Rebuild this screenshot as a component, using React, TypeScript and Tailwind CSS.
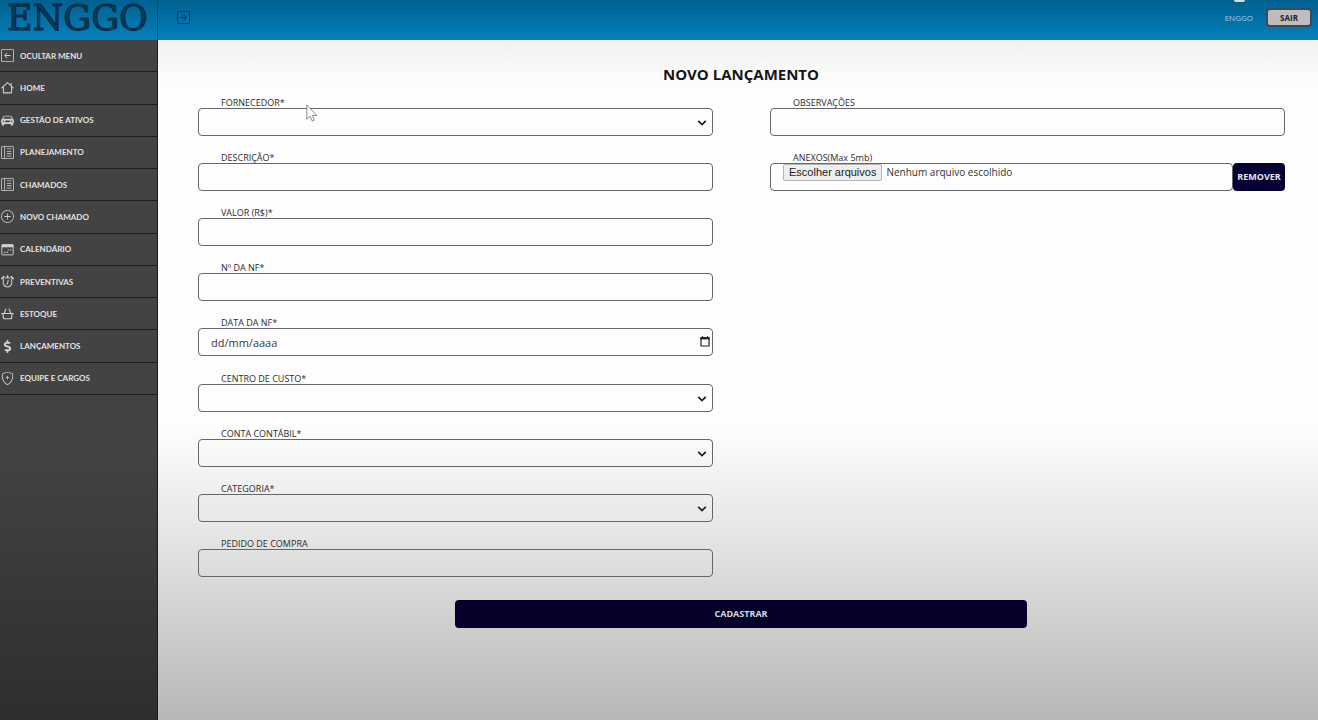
import type { ReactNode } from "react";
import type { IconType } from "react-icons";
import {
    BsArrowLeftSquare,
    BsArrowRightSquare,
    BsCarFrontFill,
    BsLayoutTextSidebarReverse,
    BsPlusCircle,
    BsShieldPlus,
} from "react-icons/bs";
import { FaDollarSign } from "react-icons/fa";

function HouseIcon({ className }: { className?: string }) {
    return (
        <svg viewBox="0 0 16 16" fill="none" stroke="currentColor" strokeWidth="1.3" strokeLinejoin="round" strokeLinecap="round" className={className}>
            <path d="M1 8.6 8 2l7 6.6M3 7.4v7.2h10V7.4M12.4 5.6V2.8" />
        </svg>
    );
}

function CalendarIcon({ className }: { className?: string }) {
    return (
        <svg viewBox="0 0 16 16" fill="none" stroke="currentColor" strokeWidth="1.2" className={className}>
            <rect x="1" y="2" width="14" height="12.6" rx="1" />
            <path d="M1 3.6h14" strokeWidth="3.4" />
            <path d="M3.6 11.4h2M6.6 11.4h2M8 8.6h1.8M11 8.6h2" strokeWidth="1.4" />
        </svg>
    );
}

function AlarmIcon({ className }: { className?: string }) {
    return (
        <svg viewBox="0 0 16 16" fill="none" stroke="currentColor" strokeWidth="1.3" strokeLinecap="round" className={className}>
            <path d="M3.4 5.4C1.6 9 3 14.8 8 14.8S14.4 9 12.6 5.4M5.6 3.8a6 6 0 0 1 4.8 0M8.8 6.4 8.4 9.4l-1.2 2" />
            <path d="M1.2 4.4 3.4 2.2M14.8 4.4l-2.2-2.2M8 1.4v1.2" strokeWidth="2.2" />
        </svg>
    );
}

function BasketIcon({ className }: { className?: string }) {
    return (
        <svg viewBox="0 0 16 16" fill="none" stroke="currentColor" strokeWidth="1.4" strokeLinejoin="round" strokeLinecap="round" className={className}>
            <path d="M.8 8h14.4M2.4 8l.8 6.4h9.6l.8-6.4M4 7.6l2-5M12 7.6l-2-5" />
        </svg>
    );
}

const menu: { label: string; icon: IconType | typeof HouseIcon }[] = [
    { label: "OCULTAR MENU", icon: BsArrowLeftSquare },
    { label: "HOME", icon: HouseIcon },
    { label: "GESTÃO DE ATIVOS", icon: BsCarFrontFill },
    { label: "PLANEJAMENTO", icon: BsLayoutTextSidebarReverse },
    { label: "CHAMADOS", icon: BsLayoutTextSidebarReverse },
    { label: "NOVO CHAMADO", icon: BsPlusCircle },
    { label: "CALENDÁRIO", icon: CalendarIcon },
    { label: "PREVENTIVAS", icon: AlarmIcon },
    { label: "ESTOQUE", icon: BasketIcon },
    { label: "LANÇAMENTOS", icon: FaDollarSign },
    { label: "EQUIPE E CARGOS", icon: BsShieldPlus },
];

const fields = [
    { id: "fornecedor", label: "FORNECEDOR*", type: "select" },
    { id: "descricao", label: "DESCRIÇÃO*", type: "text" },
    { id: "valor", label: "VALOR (R$)*", type: "text" },
    { id: "nf", label: "Nº DA NF*", type: "text" },
    { id: "data", label: "DATA DA NF*", type: "date" },
    { id: "centro", label: "CENTRO DE CUSTO*", type: "select" },
    { id: "conta", label: "CONTA CONTÁBIL*", type: "select" },
    { id: "categoria", label: "CATEGORIA*", type: "select" },
    { id: "pedido", label: "PEDIDO DE COMPRA", type: "text" },
];

const control = "block h-7 w-full appearance-none rounded-sm border border-[#66666a] bg-transparent px-3 text-[11px] text-[#333] placeholder:text-[#3a3a3a]";

function Field({ id, label, children }: { id: string; label: string; children: ReactNode }) {
    return (
        <div>
            <label htmlFor={id} className="block w-fit pt-0.5 pl-[23px] text-[9px] leading-[10px] text-[#2c2c2c]">{label}</label>
            <div className="relative">{children}</div>
        </div>
    );
}

function Control({ id, type }: { id: string; type: string }) {
    if (type === "select") {
        return (
            <>
                <select id={id} className={control} defaultValue="">
                    <option value=""></option>
                </select>
                <svg viewBox="0 0 10 6" className="pointer-events-none absolute top-3 right-[6px] h-[6px] w-[10px]" fill="none" stroke="#222" strokeWidth="1.8">
                    <path d="M1.2.8 5 4.6 8.8.8" />
                </svg>
            </>
        );
    }
    if (type === "date") {
        return (
            <>
                <input id={id} type="text" placeholder="dd/mm/aaaa" className={control} />
                <button type="button" aria-label="Abrir calendário" className="absolute top-2 right-[3px]">
                    <svg viewBox="0 0 10 11" className="h-[11px] w-[10px]" fill="none" stroke="#222">
                        <path d="M1 1.5h8v8.5H1z" strokeWidth="1.2" />
                        <path d="M.4 2.4h9.2" strokeWidth="2" />
                        <path d="M2.5 0v2M7.5 0v2" />
                    </svg>
                </button>
            </>
        );
    }
    return <input id={id} type="text" className={control} />;
}

export default function App() {
    return (
        <div className="flex min-h-screen flex-col font-['Open_Sans','Noto_Sans',sans-serif]">
            <header className="relative flex h-10 bg-linear-to-b from-[#00608f] to-[#0581bd]">
                <div className="w-[158px] border-r border-[#0a4a70] pl-[7px] font-['DejaVu_Serif',serif] text-[35px] leading-9 text-[#063a5c] [-webkit-text-stroke:1px_#06283f]">
                    ENGGO
                </div>
                <div className="flex flex-1 items-center justify-between pr-[6px] pb-[5px] pl-[19px]">
                    <button type="button" aria-label="Abrir menu" className="text-[#06304c]">
                        <BsArrowRightSquare className="size-[13px]" />
                    </button>
                    <div className="flex items-center gap-[13px]">
                        <span className="text-[8px] text-[#9fd0ea]">ENGGO</span>
                        <button type="button" className="h-[19px] w-[46px] rounded-sm border-2 border-[#3c4a54] bg-[#bdbdc0] text-[8px] leading-none font-bold text-[#222]">
                            SAIR
                        </button>
                    </div>
                </div>
                <span className="absolute top-0 right-[73px] h-[2px] w-[11px] rounded-b-full bg-[#d5dde2]" />
            </header>

            <div className="flex flex-1">
                <aside className="w-[158px] shrink-0 border-r border-[#1c1c1c] bg-linear-to-b from-[#434343] from-60% to-[#2e2e2e]">
                    <nav className="grid h-[355px] auto-rows-fr">
                        {menu.map(({ label, icon: Icon }) => (
                            <a key={label} href="#" className="flex items-center gap-[6px] border-b border-[#1d1d1d] pl-px font-['Lato',sans-serif] text-[8px] font-bold text-[#e2e2e2]">
                                <Icon className="size-[13px] text-[#d0d0d0]" />
                                {label}
                            </a>
                        ))}
                    </nav>
                </aside>

                <main className="relative flex-1 bg-[linear-gradient(to_bottom,#f0f0ee_0%,#fdfdfd_6%,#fdfdfd_57%,#e0e0e0_76%,#cbcbcb_88%,#b7b7b7_100%)] pt-6 pr-[5px] pl-[11px]">
                    <h1 className="text-center text-[15px] leading-5 font-bold text-[#161616]">NOVO LANÇAMENTO</h1>

                    <form className="mt-3">
                        <div className="grid grid-cols-2">
                            <div className="grid h-[496px] auto-rows-fr pr-[28px] pl-[29px]">
                                {fields.map((field) => (
                                    <Field key={field.id} id={field.id} label={field.label}>
                                        <Control id={field.id} type={field.type} />
                                    </Field>
                                ))}
                            </div>
                            <div className="flex flex-col gap-[15px] pr-[28px] pl-[29px]">
                                <Field id="observacoes" label="OBSERVAÇÕES">
                                    <Control id="observacoes" type="text" />
                                </Field>
                                <Field id="anexos" label="ANEXOS(Max 5mb)">
                                    <div className="flex">
                                        <div className="flex h-7 flex-1 items-start gap-1 rounded-sm border border-[#66666a] pl-3">
                                            <input id="anexos" type="file" multiple className="sr-only" />
                                            <label htmlFor="anexos" className="rounded-xs border border-[#b5b5b5] bg-[#eee] px-[5px] font-['Liberation_Sans',sans-serif] text-[11px] leading-[15px] text-[#222]">
                                                Escolher arquivos
                                            </label>
                                            <span className="text-[10px] leading-4 text-[#333]">Nenhum arquivo escolhido</span>
                                        </div>
                                        <button type="button" className="h-7 w-[52px] rounded-sm bg-[#060033] text-[9px] font-bold text-[#e4e4ee]">
                                            REMOVER
                                        </button>
                                    </div>
                                </Field>
                            </div>
                        </div>
                        <button type="submit" className="mx-auto mt-2 block h-7 w-1/2 rounded-sm bg-[#040029] text-[9px] font-bold text-[#d8d8de]">
                            CADASTRAR
                        </button>
                    </form>

                    <svg viewBox="0 0 12 18" className="pointer-events-none absolute top-16 left-[148px] h-[18px] w-3" fill="#fff" stroke="#8a8a8a">
                        <path d="M.8 1v14.2l3.3-3 2.2 4.8 2-.9-2-4.6h4.6z" />
                    </svg>
                </main>
            </div>
        </div>
    );
}
